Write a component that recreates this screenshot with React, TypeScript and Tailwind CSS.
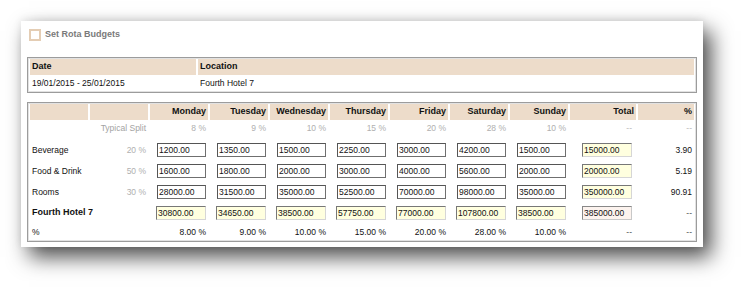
import React from "react";

const days = ["Monday", "Tuesday", "Wednesday", "Thursday", "Friday", "Saturday", "Sunday"];
const typicalSplit = ["8 %", "9 %", "10 %", "15 %", "20 %", "28 %", "10 %"];

const rows = [
  {
    name: "Beverage",
    split: "20 %",
    values: ["1200.00", "1350.00", "1500.00", "2250.00", "3000.00", "4200.00", "1500.00"],
    total: "15000.00",
    share: "3.90",
  },
  {
    name: "Food & Drink",
    split: "50 %",
    values: ["1600.00", "1800.00", "2000.00", "3000.00", "4000.00", "5600.00", "2000.00"],
    total: "20000.00",
    share: "5.19",
  },
  {
    name: "Rooms",
    split: "30 %",
    values: ["28000.00", "31500.00", "35000.00", "52500.00", "70000.00", "98000.00", "35000.00"],
    total: "350000.00",
    share: "90.91",
  },
];

const hotelTotals = ["30800.00", "34650.00", "38500.00", "57750.00", "77000.00", "107800.00", "38500.00"];
const dayPercents = ["8.00 %", "9.00 %", "10.00 %", "15.00 %", "20.00 %", "28.00 %", "10.00 %"];

function BudgetInput({ value, variant = "edit" }: { value: string; variant?: "edit" | "calc" | "grand" }) {
  const styles = {
    edit: "border-[#6f6f6f] border-t-[#555] border-l-[#555] bg-white",
    calc: "border-[#d6d6d6] border-t-[#777] border-l-[#777] bg-[#ffffdf]",
    grand: "border-[#c8c8c8] border-t-[#888] border-l-[#888] bg-[#fcf3ee]",
  };
  return (
    <input
      readOnly
      defaultValue={value}
      className={`ml-auto block h-[14px] border pl-px text-left text-[8.5px] leading-none text-[#111] outline-none ${
        variant === "edit" ? "w-[49px]" : "w-[50px]"
      } ${styles[variant]}`}
    />
  );
}

export default function App() {
  return (
    <div
      className="h-[289px] w-[745px] overflow-hidden bg-white pt-[21px] pl-[21px] text-[8.5px] text-[#111]"
      style={{ fontFamily: '"Liberation Sans", Arial, sans-serif' }}
    >
      <div className="w-[682px] bg-white px-[6px] pt-[8px] pb-[5px] shadow-[8px_10px_20px_rgba(0,0,0,0.7),0_-2px_8px_rgba(0,0,0,0.08)]">
        <div className="ml-[2px] flex h-[12px] items-center gap-[4px]">
          <span className="block h-[12px] w-[12px] border-2 border-[#e4cdb4] bg-white" />
          <span className="text-[9px] font-bold text-[#7a7a7a]">Set Rota Budgets</span>
        </div>

        <div className="mt-[16px] border border-[#9c9c9c] shadow-[inset_1px_1px_0_#e2e2e2,inset_-1px_-1px_0_#e2e2e2]">
          <table className="w-full table-fixed border-separate border-spacing-x-[2px] border-spacing-y-[1px]">
            <colgroup>
              <col className="w-[166px]" />
              <col className="w-[496px]" />
            </colgroup>
            <thead>
              <tr className="h-[16px] bg-[#eddcca] text-[9px] font-bold">
                <th className="pl-[2px] text-left">Date</th>
                <th className="pl-[2px] text-left">Location</th>
              </tr>
            </thead>
            <tbody>
              <tr className="h-[15px]">
                <td className="pl-[2px]">19/01/2015 - 25/01/2015</td>
                <td className="pl-[2px]">Fourth Hotel 7</td>
              </tr>
            </tbody>
          </table>
        </div>

        <div className="mt-[9px] border border-[#9c9c9c] shadow-[inset_1px_1px_0_#e2e2e2,inset_-1px_-1px_0_#e2e2e2]">
          <table className="w-full table-fixed border-separate border-spacing-x-[2px] border-spacing-y-[1px]">
            <colgroup>
              <col className="w-[58px]" />
              <col className="w-[58px]" />
              {days.map((d) => (
                <col key={d} className="w-[58px]" />
              ))}
              <col className="w-[66px]" />
              <col className="w-[56px]" />
            </colgroup>
            <thead>
              <tr className="h-[16px] text-[9px] font-bold">
                <th className="bg-[#eddcca]" />
                <th className="bg-[#eddcca]" />
                {days.map((d) => (
                  <th key={d} className="bg-[#eddcca] pr-[2px] text-right">
                    {d}
                  </th>
                ))}
                <th className="bg-[#eddcca] pr-[2px] text-right">Total</th>
                <th className="bg-[#eddcca] pr-[2px] text-right">%</th>
              </tr>
            </thead>
            <tbody>
              <tr className="h-[18px] align-top">
                <td />
                <td className="pt-px pr-[2px] text-right text-[#a3a3a3]">Typical Split</td>
                {typicalSplit.map((s, i) => (
                  <td key={i} className="pt-px pr-[2px] text-right text-[#b0b0b0]">
                    {s}
                  </td>
                ))}
                <td className="pt-px pr-[4px] text-right text-[#bbb]">--</td>
                <td className="pt-px pr-[2px] text-right text-[#bbb]">--</td>
              </tr>

              {rows.map((row) => (
                <tr key={row.name} className="h-[20px]">
                  <td className="pl-[2px]">{row.name}</td>
                  <td className="pr-[2px] text-right text-[#b0b0b0]">{row.split}</td>
                  {row.values.map((v, i) => (
                    <td key={i} className="pr-[2px]">
                      <BudgetInput value={v} />
                    </td>
                  ))}
                  <td className="pr-[4px]">
                    <BudgetInput value={row.total} variant="calc" />
                  </td>
                  <td className="pr-[2px] text-right">{row.share}</td>
                </tr>
              ))}

              <tr className="h-[20px]">
                <td className="overflow-visible whitespace-nowrap pl-[2px] text-[9px] font-bold">Fourth Hotel 7</td>
                <td />
                {hotelTotals.map((v, i) => (
                  <td key={i} className="pr-[2px]">
                    <BudgetInput value={v} variant="calc" />
                  </td>
                ))}
                <td className="pr-[4px]">
                  <BudgetInput value="385000.00" variant="grand" />
                </td>
                <td className="pr-[2px] text-right text-[#555]">--</td>
              </tr>

              <tr className="h-[16px]">
                <td className="pl-[2px]">%</td>
                <td />
                {dayPercents.map((p, i) => (
                  <td key={i} className="pr-[2px] text-right">
                    {p}
                  </td>
                ))}
                <td className="pr-[4px] text-right text-[#555]">--</td>
                <td className="pr-[2px] text-right text-[#555]">--</td>
              </tr>
            </tbody>
          </table>
        </div>
      </div>
    </div>
  );
}
